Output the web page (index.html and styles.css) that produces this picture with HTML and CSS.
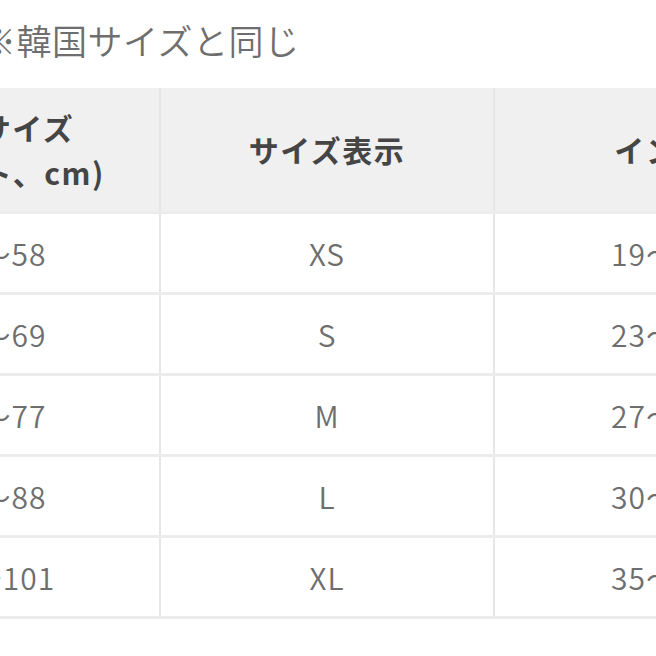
FILE: index.html
```html
<!DOCTYPE html>
<html lang="ja">
<head>
<meta charset="utf-8">
<link rel="stylesheet" href="styles.css">
</head>
<body>
<div class="page">
  <p class="note">※韓国サイズと同じ</p>
  <table class="size-table">
    <thead>
      <tr>
        <th class="col-cm">胸囲サイズ<br>（バスト、cm)</th>
        <th class="col-size">サイズ表示</th>
        <th class="col-inch">インチ</th>
      </tr>
    </thead>
    <tbody>
      <tr><td>48〜58</td><td>XS</td><td>19〜23</td></tr>
      <tr><td>58〜69</td><td>S</td><td>23〜27</td></tr>
      <tr><td>69〜77</td><td>M</td><td>27〜30</td></tr>
      <tr><td>77〜88</td><td>L</td><td>30〜35</td></tr>
      <tr><td>88〜101</td><td>XL</td><td>35〜40</td></tr>
    </tbody>
  </table>
</div>
</body>
</html>
```
FILE: styles.css
```css
html, body {
  margin: 0;
  padding: 0;
  background: #ffffff;
}
body {
  width: 656px;
  height: 656px;
  overflow: hidden;
  font-family: "Noto Sans CJK JP", "Noto Sans", sans-serif;
}
.page {
  display: flex;
  flex-direction: column;
}
.note {
  margin: 0 0 0 -19px;
  height: 88px;
  padding-top: 14px;
  box-sizing: border-box;
  font-size: 35px;
  line-height: 52px;
  letter-spacing: 0.5px;
  font-weight: 350;
  color: #6e6e6e;
  white-space: nowrap;
}
.size-table {
  margin-left: -167px;
  border-collapse: collapse;
  table-layout: fixed;
  width: 991px;
  flex: none;
}
.col-cm { width: 326px; }
.col-size { width: 332px; }
.col-inch { width: 333px; }
.size-table th,
.size-table td {
  text-align: center;
  padding: 0;
  border-right: 2px solid #e6e6e6;
  border-bottom: 3px solid #ececec;
}
.size-table th {
  background: #f0f0f0;
  height: 123px;
  font-size: 30px;
  line-height: 45px;
  letter-spacing: 1.5px;
  font-weight: 700;
  color: #454545;
}
.size-table td {
  height: 78px;
  font-size: 30px;
  letter-spacing: 1px;
  font-weight: 350;
  color: #6e6e6e;
}
```
